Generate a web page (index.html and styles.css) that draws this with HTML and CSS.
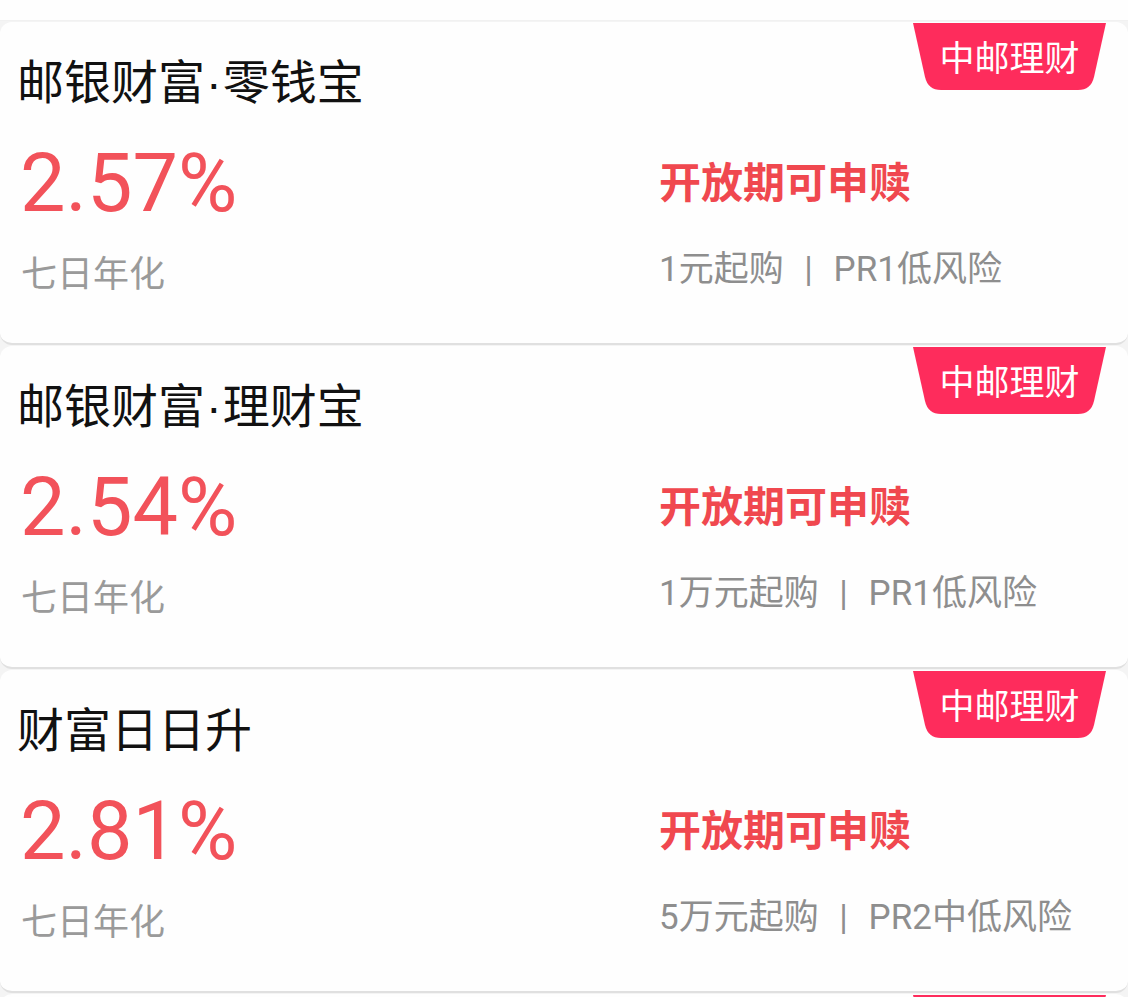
FILE: index.html
```html
<!DOCTYPE html>
<html lang="zh-CN">
<head>
<meta charset="utf-8">
<title>中邮理财</title>
<link rel="stylesheet" href="styles.css">
</head>
<body>
<div class="page">
  <div class="topbar"></div>
  <div class="list">
    <div class="card">
      <div class="badge">
        <svg class="badge-bg" viewBox="0 0 193 67" width="193" height="67"><path d="M0 0 H193 L181 54 Q178 67 165 67 H28 Q15 67 12 54 Z" fill="#fe2c5c"/></svg>
        <span class="badge-text">中邮理财</span>
      </div>
      <div class="title">邮银财富<span class="dot">·</span>零钱宝</div>
      <div class="grid">
        <div class="rate">2.57%</div>
        <div class="status">开放期可申赎</div>
        <div class="label">七日年化</div>
        <div class="info">1元起购 <span class="sep">|</span> PR1低风险</div>
      </div>
    </div>
    <div class="card">
      <div class="badge">
        <svg class="badge-bg" viewBox="0 0 193 67" width="193" height="67"><path d="M0 0 H193 L181 54 Q178 67 165 67 H28 Q15 67 12 54 Z" fill="#fe2c5c"/></svg>
        <span class="badge-text">中邮理财</span>
      </div>
      <div class="title">邮银财富<span class="dot">·</span>理财宝</div>
      <div class="grid">
        <div class="rate">2.54%</div>
        <div class="status">开放期可申赎</div>
        <div class="label">七日年化</div>
        <div class="info">1万元起购 <span class="sep">|</span> PR1低风险</div>
      </div>
    </div>
    <div class="card">
      <div class="badge">
        <svg class="badge-bg" viewBox="0 0 193 67" width="193" height="67"><path d="M0 0 H193 L181 54 Q178 67 165 67 H28 Q15 67 12 54 Z" fill="#fe2c5c"/></svg>
        <span class="badge-text">中邮理财</span>
      </div>
      <div class="title">财富日日升</div>
      <div class="grid">
        <div class="rate">2.81%</div>
        <div class="status">开放期可申赎</div>
        <div class="label">七日年化</div>
        <div class="info">5万元起购 <span class="sep">|</span> PR2中低风险</div>
      </div>
    </div>
    <div class="card">
      <div class="badge">
        <svg class="badge-bg" viewBox="0 0 193 67" width="193" height="67"><path d="M0 0 H193 L181 54 Q178 67 165 67 H28 Q15 67 12 54 Z" fill="#fe2c5c"/></svg>
      </div>
    </div>
  </div>
</div>
</body>
</html>
```

FILE: styles.css
```css
html, body {
  margin: 0;
  padding: 0;
}
body {
  background: #f4f4f4;
  font-family: "Noto Sans CJK SC", "Noto Sans", sans-serif;
  overflow: hidden;
}
.page {
  width: 1128px;
  height: 997px;
  overflow: hidden;
}
.topbar {
  height: 20px;
  background: #fefefe;
  border-bottom: 1px solid #f1f1f1;
  margin-bottom: 1px;
}
.list {
  display: flex;
  flex-direction: column;
}
.card {
  position: relative;
  box-sizing: border-box;
  height: 323px;
  flex: none;
  background: #fefefe;
  border-radius: 12px;
  border-bottom: 2px solid #e0e0e0;
  margin-bottom: 1px;
  padding: 29px 0 0 17px;
}
.badge {
  position: absolute;
  top: 1px;
  right: 22px;
  width: 193px;
  height: 67px;
  display: flex;
  align-items: center;
  justify-content: center;
}
.badge-bg {
  position: absolute;
  left: 0;
  top: 0;
}
.badge-text {
  position: relative;
  color: #ffffff;
  font-size: 35px;
  line-height: 40px;
  margin-top: -2px;
}
.title {
  font-size: 47px;
  line-height: 56px;
  color: #111111;
  height: 56px;
}
.dot {
  font-family: "Liberation Sans", sans-serif;
  margin: 0 1px;
}
.grid {
  display: grid;
  grid-template-columns: 642px 1fr;
  grid-template-rows: 90px 40px;
  row-gap: 22px;
  margin-top: 32px;
}
.rate {
  font-family: Roboto, "Noto Sans", sans-serif;
  font-size: 81px;
  line-height: 90px;
  color: #f2525a;
  margin-left: 3px;
}
.status {
  align-self: center;
  font-size: 42px;
  line-height: 50px;
  font-weight: 700;
  color: #f0484f;
  margin-top: -8px;
}
.label {
  font-size: 36px;
  line-height: 40px;
  color: #9a9a9a;
  margin-left: 4px;
}
.info {
  font-family: Roboto, "Noto Sans CJK SC", sans-serif;
  font-size: 35px;
  line-height: 40px;
  color: #8e8e8e;
  margin-top: -1px;
}
.sep {
  display: inline-block;
  margin: 0 12px;
}
```
